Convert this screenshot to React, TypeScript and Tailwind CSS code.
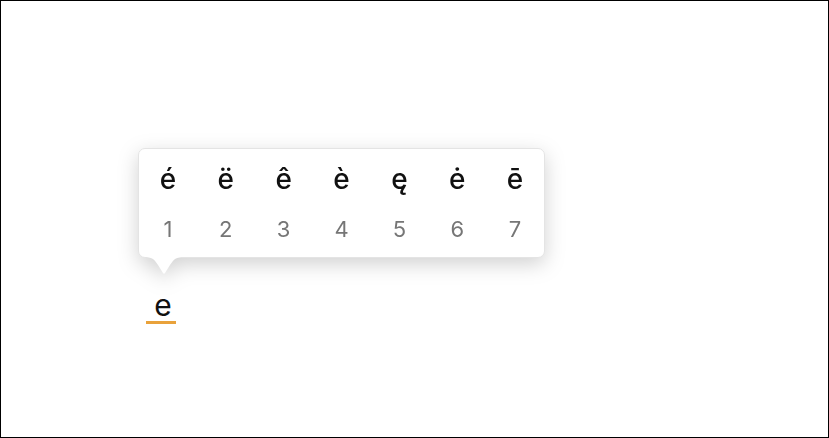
const accents = ["é", "ë", "ê", "è", "ę", "ė", "ē"];

function Arrow() {
  return (
    <svg width="40" height="18" viewBox="0 0 40 18" className="block -mt-px ml-[6px]">
      <path d="M0 0 C8 0 10 2 14 8 L19 16 Q20 17.5 21 16 L26 8 C30 2 32 0 40 0 Z" fill="#ffffff" />
    </svg>
  );
}

export default function App() {
  return (
    <div
      className="relative w-[829px] h-[438px] bg-white border border-black overflow-hidden"
      style={{ fontFamily: "Inter, 'Noto Sans', sans-serif" }}
    >
      <div className="absolute left-[137px] top-[147px] drop-shadow-[0_6px_10px_rgba(0,0,0,0.18)]">
        <div className="w-[407px] h-[110px] rounded-[7px] bg-white border border-[#e4e4e4] pt-[13px]">
          <div className="grid grid-cols-7">
            {accents.map((a, i) => (
              <div key={i} className="flex flex-col items-center">
                <span className="text-[28px] leading-[34px] font-medium text-[#111]">{a}</span>
                <span className="mt-[20px] text-[22px] leading-[26px] text-[#767676]">{i + 1}</span>
              </div>
            ))}
          </div>
        </div>
        <Arrow />
      </div>

      <div className="pt-[286px] pl-[145px]">
        <div className="w-[30px] flex flex-col items-center">
          <span className="text-[30px] leading-[36px] text-[#111] pl-[4px]">e</span>
          <div className="w-[30px] h-[3px] bg-[#e9a23b] -mt-[2px]" />
        </div>
      </div>
    </div>
  );
}
